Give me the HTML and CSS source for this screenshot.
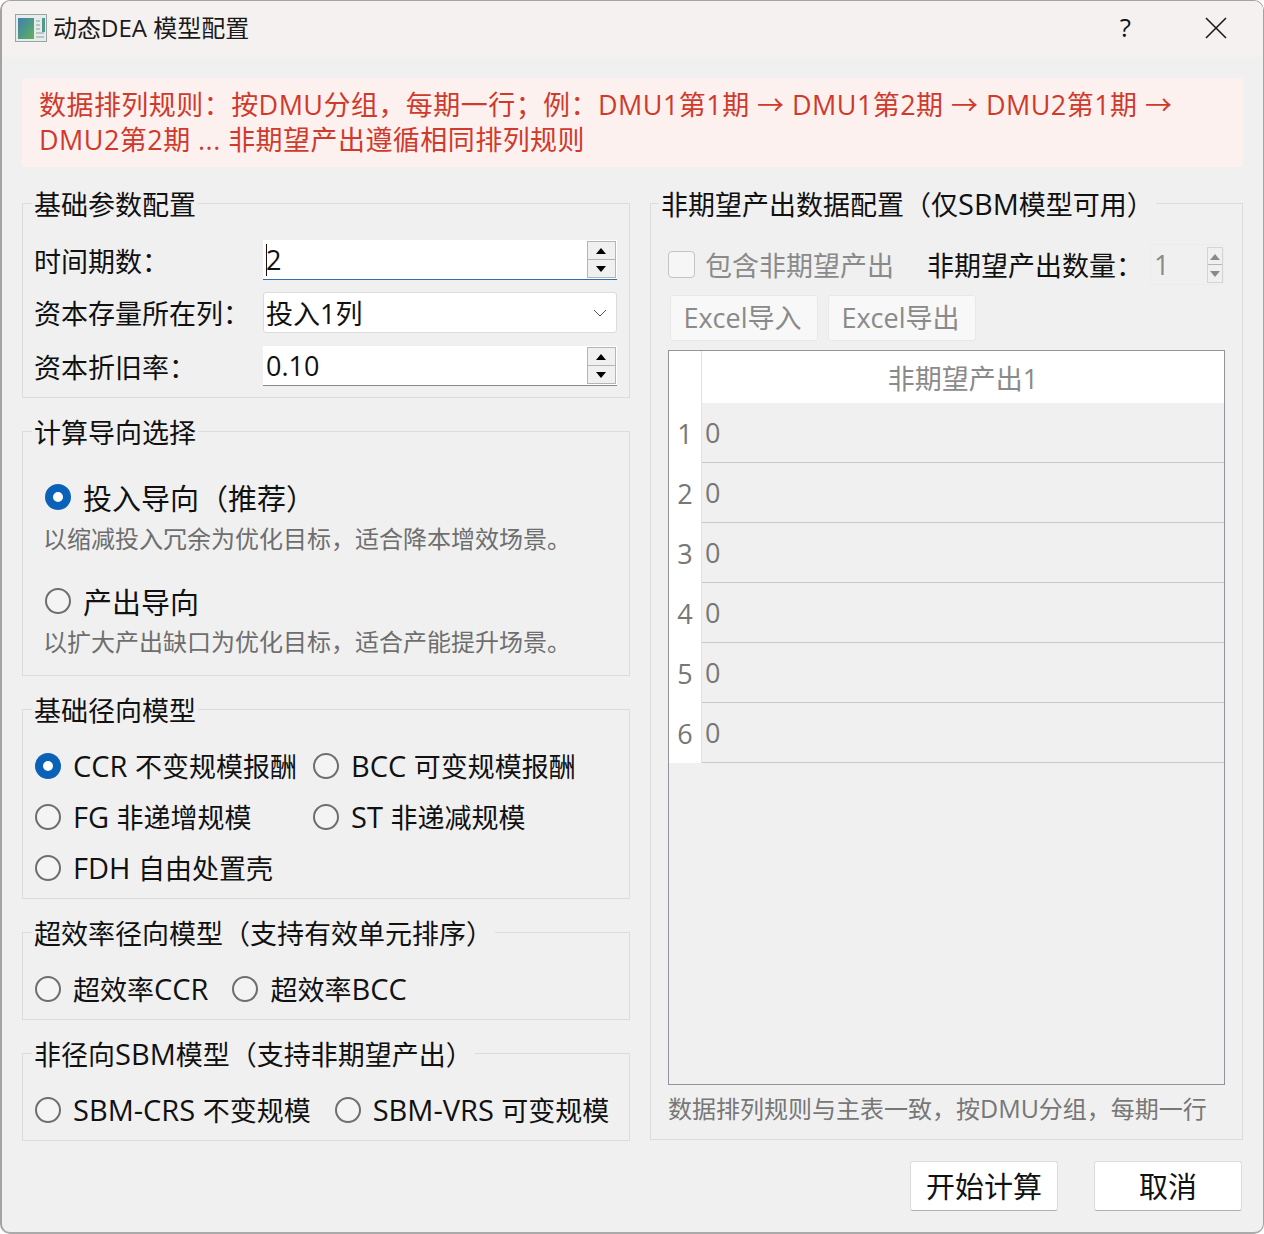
FILE: index.html
```html
<!DOCTYPE html>
<html>
  <head>
    <meta charset="utf-8">
    <title>动态DEA 模型配置</title>
    <link rel="stylesheet" href="styles.css">
  </head>
  <body>
    <div class="window">
      <div class="titlebar">
        <svg class="app_icon" width="32" height="28" viewBox="0 0 32 28">
          <defs>
            <linearGradient id="pane" x1="0" y1="0" x2="1" y2="1">
              <stop offset="0" stop-color="#3f7fb0"/>
              <stop offset="1" stop-color="#5fb25a"/>
            </linearGradient>
          </defs>
          <rect x="0.5" y="0.5" width="31" height="27" fill="#e6ebec" stroke="#9aa3a6"/>
          <rect x="3" y="4" width="16" height="21" fill="url(#pane)"/>
          <rect x="27" y="4" width="3" height="14" fill="#4f9a8c"/>
          <path d="M21 7h4M21 11h4M21 15h4M21 19h8M21 23h8" stroke="#aeb6b8" stroke-width="1.5"/>
        </svg>
        <span class="title">动态DEA 模型配置</span>
        <span class="help">?</span>
        <svg class="close" width="22" height="22" viewBox="0 0 22 22">
          <path d="M1 1L21 21M21 1L1 21" stroke="#1a1a1a" stroke-width="1.6" fill="none"/>
        </svg>
      </div>

      <div class="notice">数据排列规则：按DMU分组，每期一行；例：DMU1第1期 → DMU1第2期 → DMU2第1期 → DMU2第2期 ... 非期望产出遵循相同排列规则</div>

      <div class="columns">
        <div class="left_col">
          <fieldset class="group params">
            <legend>基础参数配置</legend>
            <div class="form_row">
              <label>时间期数：</label>
              <div class="spin focus">
                <span class="spin_val"><i class="caret"></i>2</span>
                <span class="spin_btns"><b class="up"></b><b class="down"></b></span>
              </div>
            </div>
            <div class="form_row combo_row">
              <label>资本存量所在列：</label>
              <div class="combo">
                <span>投入1列</span>
                <svg width="14" height="8" viewBox="0 0 14 8"><path d="M1 1L7 7L13 1" stroke="#555" fill="none"/></svg>
              </div>
            </div>
            <div class="form_row">
              <label>资本折旧率：</label>
              <div class="spin">
                <span class="spin_val">0.10</span>
                <span class="spin_btns"><b class="up"></b><b class="down"></b></span>
              </div>
            </div>
          </fieldset>

          <fieldset class="group orient">
            <legend>计算导向选择</legend>
            <label class="radio big"><input type="radio" name="orient" checked>投入导向（推荐）</label>
            <p class="hint">以缩减投入冗余为优化目标，适合降本增效场景。</p>
            <label class="radio big second"><input type="radio" name="orient">产出导向</label>
            <p class="hint">以扩大产出缺口为优化目标，适合产能提升场景。</p>
          </fieldset>

          <fieldset class="group radial">
            <legend>基础径向模型</legend>
            <label class="radio"><input type="radio" name="model" checked><span class="clip"><span class="en">CCR </span>不变规模报酬</span></label>
            <label class="radio"><input type="radio" name="model"><span class="clip"><span class="en">BCC </span>可变规模报酬</span></label>
            <label class="radio"><input type="radio" name="model"><span class="en">FG&nbsp;</span>非递增规模</label>
            <label class="radio"><input type="radio" name="model"><span class="en">ST&nbsp;</span>非递减规模</label>
            <label class="radio"><input type="radio" name="model"><span class="en">FDH&nbsp;</span>自由处置壳</label>
          </fieldset>

          <fieldset class="group inline">
            <legend>超效率径向模型（支持有效单元排序）</legend>
            <label class="radio"><input type="radio" name="model">超效率<span class="en">CCR</span></label>
            <label class="radio"><input type="radio" name="model">超效率<span class="en">BCC</span></label>
          </fieldset>

          <fieldset class="group inline">
            <legend>非径向<span class="en">SBM</span>模型（支持非期望产出）</legend>
            <label class="radio"><input type="radio" name="model"><span class="en">SBM-CRS&nbsp;</span>不变规模</label>
            <label class="radio"><input type="radio" name="model"><span class="en">SBM-VRS&nbsp;</span>可变规模</label>
          </fieldset>
        </div>

        <fieldset class="group right_col">
          <legend>非期望产出数据配置（仅<span class="en">SBM</span>模型可用）</legend>
          <div class="undes_row">
            <label class="check"><input type="checkbox" disabled>包含非期望产出</label>
            <span class="undes_label">非期望产出数量：</span>
            <div class="spin_off">
              <span>1</span>
              <span class="spin_btns"><b class="up"></b><b class="down"></b></span>
            </div>
          </div>
          <div class="excel_btns">
            <button disabled>Excel导入</button>
            <button disabled>Excel导出</button>
          </div>
          <div class="table_box">
            <table>
              <thead>
                <tr><th class="corner"></th><th>非期望产出1</th></tr>
              </thead>
              <tbody>
                <tr><th>1</th><td>0</td></tr>
                <tr><th>2</th><td>0</td></tr>
                <tr><th>3</th><td>0</td></tr>
                <tr><th>4</th><td>0</td></tr>
                <tr><th>5</th><td>0</td></tr>
                <tr><th>6</th><td>0</td></tr>
              </tbody>
            </table>
          </div>
          <p class="table_note">数据排列规则与主表一致，按<span class="en_small">DMU</span>分组，每期一行</p>
        </fieldset>
      </div>

      <div class="actions">
        <button>开始计算</button>
        <button>取消</button>
      </div>
    </div>
  </body>
</html>
```

FILE: styles.css
```css
html, body { height: 100%; margin: 0; }
body {
  background: #fff;
  overflow: hidden;
  font-family: "Open Sans", "Noto Sans CJK SC", sans-serif;
  font-size: 27px;
  color: #111;
}
.en { font-size: 29px; line-height: 1; }
.en_small { font-size: 25px; line-height: 1; }

.window {
  box-sizing: border-box;
  height: 1234px;
  border: 1px solid #a3a3a3;
  border-left-width: 2px;
  border-bottom: 2px solid #aaa;
  border-radius: 10px;
  background: #f0f0f0;
  overflow: hidden;
}

.titlebar {
  display: flex;
  align-items: center;
  box-sizing: border-box;
  height: 56px;
  padding: 0 0 2px 13px;
  background: #f5f1f1;
}
.app_icon { margin-right: 6px; }
.title { flex: 1; font-size: 24px; color: #1a1a1a; margin-bottom: 4px; }
.help { font-size: 26px; margin-right: 74px; margin-bottom: 2px; }
.close { margin-right: 36px; }

.notice {
  margin: 21px 20px 0 20px;
  height: 89px;
  box-sizing: border-box;
  padding: 9px 17px 0;
  background: #fdf1f0;
  border-radius: 4px;
  color: #d03a2a;
  line-height: 35px;
  letter-spacing: 0.45px;
}

.columns {
  display: flex;
  gap: 20px;
  margin: 18px 20px 0 20px;
}
.left_col {
  display: flex;
  flex-direction: column;
  gap: 15px;
  width: 608px;
}
.group {
  box-sizing: border-box;
  min-width: 0;
  margin: 0;
  border: 1px solid #dcdcdc;
  padding: 0 12px 11px;
}
.group legend {
  margin-left: -3px;
  padding: 0 2px;
  height: 36px;
  line-height: 40px;
}

.params { padding-left: 11px; }
.params legend { margin-left: -2px; }
.form_row {
  display: flex;
  align-items: center;
  margin-bottom: 12px;
}
.form_row:first-of-type { margin-top: 19px; }
.form_row:last-child { margin-bottom: 0; }
.combo_row { margin-bottom: 13px; }
.form_row label { width: 229px; line-height: 36px; margin-top: 3px; }

.spin, .combo {
  box-sizing: border-box;
  flex: none;
  width: 354px;
  height: 40px;
  display: flex;
  align-items: center;
  justify-content: space-between;
  background: #fff;
  padding-left: 3px;
}
.combo { height: 41px; }
.spin { border-bottom: 1px solid #8a8a8a; }
.spin.focus { border-bottom-color: #2f6fb0; }
.combo { border: 1px solid #dcdcdc; border-radius: 3px; padding-right: 9px; padding-left: 2px; }
.spin_val { display: flex; align-items: center; }
.caret { display: block; width: 1px; height: 32px; background: #111; margin-right: -1px; }

.spin_btns {
  box-sizing: border-box;
  display: flex;
  flex-direction: column;
  width: 29px;
  height: 37px;
  margin-right: 1px;
  border: 1px solid #b5b5b5;
  background: #f0f0f0;
}
.spin_btns b { position: relative; flex: 1; }
.spin_btns .up { border-bottom: 1px solid #b5b5b5; }
.spin_btns b::after {
  content: "";
  position: absolute;
  left: 8px;
  top: 6px;
  border-left: 5px solid transparent;
  border-right: 5px solid transparent;
}
.spin_btns .up::after { border-bottom: 6px solid #000; }
.spin_btns .down::after { border-top: 6px solid #000; }

.radio {
  display: flex;
  align-items: center;
  white-space: nowrap;
}
.radio input, .check input {
  appearance: none;
  box-sizing: border-box;
  flex: none;
  margin: 0;
}
.radio input {
  width: 26px;
  height: 26px;
  margin-right: 12px;
  border: 2px solid #6e6e6e;
  border-radius: 50%;
  background: #f4f4f4;
}
.radio input:checked {
  border: 8px solid #0a62b8;
  background: #fff;
}
.clip { display: block; width: 224px; overflow: hidden; }

.orient { padding: 27px 9px 13px 22px; }
.orient legend { margin-left: -13px; }
.orient .big { height: 42px; font-size: 29px; }
.orient .second { margin-top: 21px; }
.hint {
  margin: 0 0 0 -2px;
  height: 40px;
  line-height: 40px;
  font-size: 24px;
  color: #6e6e6e;
}
.hint:first-of-type { margin-top: 1px; }

.radial {
  display: grid;
  grid-template-columns: 278px 1fr;
  grid-auto-rows: 51px;
  padding-top: 13px;
  padding-bottom: 5px;
}
.inline {
  display: flex;
  gap: 24px;
  padding-top: 13px;
  padding-bottom: 5px;
}
.inline .radio { height: 51px; }

.right_col { width: 593px; height: 955px; padding: 0 17px 0; display: flow-root; }
.right_col legend { margin-left: -9px; }
.undes_row {
  display: flex;
  align-items: center;
  height: 41px;
  margin-top: 23px;
}
.check { display: flex; align-items: center; width: 259px; color: #8a8a8a; }
.check input {
  width: 27px;
  height: 27px;
  margin-right: 10px;
  border: 1px solid #c4c4c4;
  border-radius: 4px;
  background: #f6f6f6;
}
.undes_label { width: 223px; }
.spin_off {
  box-sizing: border-box;
  display: flex;
  align-items: center;
  justify-content: space-between;
  width: 74px;
  height: 41px;
  padding-left: 3px;
  color: #8a8a8a;
  border: 1px solid #ececec;
}
.spin_off .spin_btns { width: 16px; border-color: #d4d4d4; height: 36px; margin-right: 0; }
.spin_off .spin_btns b::after { left: 2px; }
.spin_off .up::after { border-bottom-color: #8a8a8a; }
.spin_off .down::after { border-top-color: #8a8a8a; }

button {
  font: inherit;
  box-sizing: border-box;
  border-radius: 3px;
}
.excel_btns { display: flex; gap: 10px; margin: 10px 0 9px 2px; }
.excel_btns button {
  width: 148px;
  height: 46px;
  padding: 0 3px 3px 0;
  background: #f8f8f8;
  border: 1px solid #e8e8e8;
  color: #8a8a8a;
}

.table_box {
  box-sizing: border-box;
  height: 735px;
  border: 1px solid #8f969b;
}
table { width: 100%; border-collapse: separate; border-spacing: 0; table-layout: fixed; }
thead th {
  height: 52px;
  padding: 0;
  background: #fff;
  font-weight: normal;
  color: #8a8a8a;
}
thead .corner { width: 32px; border-right: 1px solid #e2e2e2; }
tbody th {
  padding: 0;
  height: 60px;
  background: #fff;
  font-weight: normal;
  color: #777;
  border-right: 1px solid #e2e2e2;
}
tbody td {
  padding: 0 0 0 3px;
  height: 59px;
  color: #777;
  background: #f0f0f0;
  border-bottom: 1px solid #c8c8c8;
}
.table_note {
  margin: 6px 0 0;
  font-size: 24px;
  line-height: 36px;
  color: #777;
}

.actions {
  display: flex;
  justify-content: flex-end;
  gap: 36px;
  margin: 20px 21px 0 0;
}
.actions button {
  width: 148px;
  height: 50px;
  padding: 0 0 3px;
  font-size: 29px;
  background: #fff;
  border: 1px solid #dcdcdc;
  border-bottom-color: #b0b0b0;
  color: #111;
}
```
